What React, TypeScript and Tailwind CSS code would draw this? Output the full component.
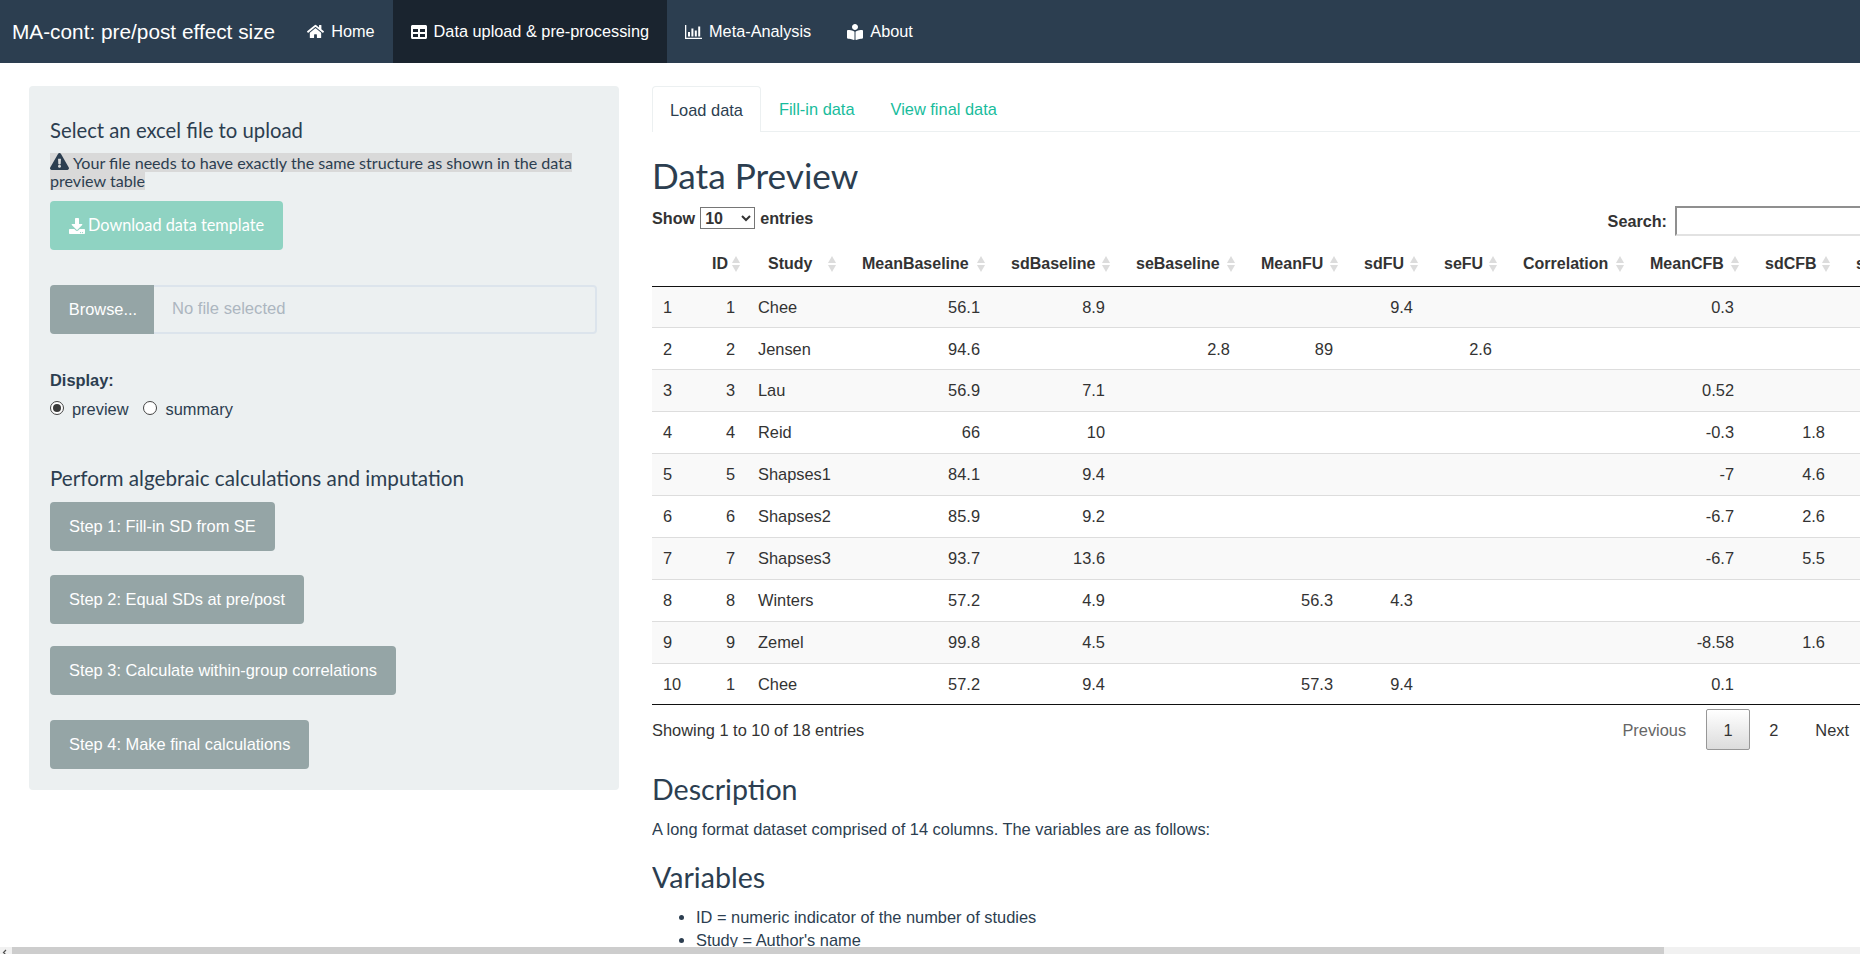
import { FaHome, FaTable, FaBookReader, FaExclamationTriangle, FaDownload } from 'react-icons/fa';

const sans = "font-['Liberation_Sans',Arial,sans-serif]";

const columns = [
  { name: '', width: 41, pl: 'pl-[19px]' },
  { name: 'ID', width: 54, pl: 'pl-[19px]' },
  { name: 'Study', width: 96, pl: 'pl-[21px]' },
  { name: 'MeanBaseline', width: 149, pl: 'pl-[19px]' },
  { name: 'sdBaseline', width: 125, pl: 'pl-[19px]' },
  { name: 'seBaseline', width: 125, pl: 'pl-[19px]' },
  { name: 'MeanFU', width: 103, pl: 'pl-[19px]' },
  { name: 'sdFU', width: 80, pl: 'pl-[19px]' },
  { name: 'seFU', width: 79, pl: 'pl-[19px]' },
  { name: 'Correlation', width: 127, pl: 'pl-[19px]' },
  { name: 'MeanCFB', width: 115, pl: 'pl-[19px]' },
  { name: 'sdCFB', width: 91, pl: 'pl-[19px]' },
  { name: 'seCFB', width: 80, pl: 'pl-[19px]' },
];

const rows = [
  ['1', '1', 'Chee', '56.1', '8.9', '', '', '9.4', '', '', '0.3', '', ''],
  ['2', '2', 'Jensen', '94.6', '', '2.8', '89', '', '2.6', '', '', '', ''],
  ['3', '3', 'Lau', '56.9', '7.1', '', '', '', '', '', '0.52', '', ''],
  ['4', '4', 'Reid', '66', '10', '', '', '', '', '', '-0.3', '1.8', ''],
  ['5', '5', 'Shapses1', '84.1', '9.4', '', '', '', '', '', '-7', '4.6', ''],
  ['6', '6', 'Shapses2', '85.9', '9.2', '', '', '', '', '', '-6.7', '2.6', ''],
  ['7', '7', 'Shapses3', '93.7', '13.6', '', '', '', '', '', '-6.7', '5.5', ''],
  ['8', '8', 'Winters', '57.2', '4.9', '', '56.3', '4.3', '', '', '', '', ''],
  ['9', '9', 'Zemel', '99.8', '4.5', '', '', '', '', '', '-8.58', '1.6', ''],
  ['10', '1', 'Chee', '57.2', '9.4', '', '57.3', '9.4', '', '', '0.1', '', ''],
];

const steps = [
  { label: 'Step 1: Fill-in SD from SE', mt: 'mt-0' },
  { label: 'Step 2: Equal SDs at pre/post', mt: 'mt-[24px]' },
  { label: 'Step 3: Calculate within-group correlations', mt: 'mt-[22px]' },
  { label: 'Step 4: Make final calculations', mt: 'mt-[25px]' },
];

function SortArrows() {
  return (
    <svg width="8" height="18" viewBox="0 0 8 18" className="shrink-0" fill="#dcdcdc">
      <path d="M4 1 8 8H0z" />
      <path d="M4 17 0 10h8z" />
    </svg>
  );
}

function BarChartIcon() {
  return (
    <svg width="17" height="14" viewBox="0 0 17 14" fill="white">
      <path d="M0 0h1.3v12.7H17V14H0z" />
      <rect x="3" y="7" width="2" height="4.5" />
      <rect x="6.4" y="3.5" width="2" height="8" />
      <rect x="9.8" y="5.5" width="2" height="6" />
      <rect x="13.2" y="1.5" width="2" height="10" />
    </svg>
  );
}

function Radio({ checked }: { checked?: boolean }) {
  return (
    <span className="flex items-center justify-center w-[14px] h-[14px] mb-[3px] rounded-full border border-[#444] bg-white">
      {checked && <span className="w-[8px] h-[8px] rounded-full bg-[#3a3a3a]" />}
    </span>
  );
}

function NavItem({ icon, label, active }: { icon: React.ReactNode; label: string; active?: boolean }) {
  return (
    <a className={`flex items-center gap-[7px] h-full px-[18px] text-white text-[16.3px] ${active ? 'bg-[#1a242f]' : ''}`}>
      {icon}
      {label}
    </a>
  );
}

export default function App() {
  return (
    <div className={`relative h-[954px] w-[1860px] overflow-hidden bg-white text-[#2c3e50] ${sans}`}>
      <nav className="flex items-center h-[63px] bg-[#2c3e50]">
        <span className="pl-[12px] pr-[14px] text-white text-[20.8px]">MA-cont: pre/post effect size</span>
        <NavItem icon={<FaHome size={17} />} label="Home" />
        <NavItem icon={<FaTable size={16} />} label="Data upload & pre-processing" active />
        <NavItem icon={<BarChartIcon />} label="Meta-Analysis" />
        <NavItem icon={<FaBookReader size={16} />} label="About" />
      </nav>

      <div className="flex items-start pl-[29px] pt-[23px] gap-[33px]">
        <aside className="w-[590px] h-[704px] shrink-0 bg-[#ecf0f1] rounded-[4px] px-[21px] pt-[31px]">
          <h4 className="font-['Lato',sans-serif] text-[20.3px] leading-[26px]">Select an excel file to upload</h4>
          <p className="mt-[9px] font-['Lato',sans-serif] text-[16.1px] leading-[17.5px]">
            <span className="bg-[#d9d9d9]">
              <FaExclamationTriangle className="inline align-[-2px] mr-[4px]" size={19} />
              Your file needs to have exactly the same structure as shown in the data preview table
            </span>
          </p>
          <button className="flex items-center gap-[3px] mt-[12px] h-[49px] w-[233px] pl-[19px] rounded-[4px] bg-[#8fd3c2] text-white font-['Lato',sans-serif] text-[16.3px] whitespace-nowrap">
            <FaDownload className="shrink-0" size={16} />
            Download data template
          </button>
          <div className="flex mt-[35px] h-[49px] w-[547px]">
            <button className="w-[104px] pl-[2px] rounded-l-[4px] bg-[#95a5a6] text-white text-[16.4px]">Browse...</button>
            <div className="flex-1 flex items-center px-[18px] border-2 border-l-0 border-[#dce4ec] rounded-r-[4px] text-[#acb6c0] text-[16.6px]">
              No file selected
            </div>
          </div>
          <div className="mt-[35px] font-bold text-[16.4px] leading-[22px]">Display:</div>
          <div className="flex items-center mt-[7px] text-[16.4px] leading-[22px]">
            <Radio checked />
            <span className="ml-[8px]">preview</span>
            <span className="w-[15px]" />
            <Radio />
            <span className="ml-[8px]">summary</span>
          </div>
          <h4 className="mt-[45px] font-['Lato',sans-serif] text-[20.7px] leading-[26px]">Perform algebraic calculations and imputation</h4>
          <div className="flex flex-col items-start mt-[11px]">
            {steps.map((s) => (
              <button key={s.label} className={`${s.mt} h-[49px] px-[19px] rounded-[4px] bg-[#95a5a6] text-white text-[16.4px]`}>
                {s.label}
              </button>
            ))}
          </div>
        </aside>

        <main className="w-[1208px] shrink-0 overflow-hidden">
          <div className="flex h-[46px] border-b border-[#ecf0f1] text-[16.4px]">
            <a className="flex items-center pt-[2px] px-[17px] h-[46px] border border-b-0 border-[#ecf0f1] rounded-t-[4px] bg-white text-[#2c3e50]">Load data</a>
            <a className="flex items-center pt-[2px] px-[18px] text-[#18bc9c]">Fill-in data</a>
            <a className="flex items-center pt-[2px] px-[18px] text-[#18bc9c]">View final data</a>
          </div>

          <h1 className="mt-[20px] font-['Lato',sans-serif] text-[35.2px] leading-[47px]">Data Preview</h1>

          <div className="flex justify-between items-start mt-[7px] w-[1273px] h-[41px] text-[#333] font-bold text-[16.2px]">
            <div className="flex items-center gap-[5px] h-[24px]">
              Show
              <select className="w-[55px] h-[22px] border border-[#767676] bg-white text-[16px] font-bold">
                <option>10</option>
              </select>
              entries
            </div>
            <div className="flex items-center gap-[8px] h-[30px]">
              Search:
              <input className="w-[250px] h-[30px] border-2 border-t-[#8f8f8f] border-l-[#8f8f8f] border-b-[#e2e2e2] border-r-[#e2e2e2]" />
            </div>
          </div>

          <table className="table-fixed w-[1265px] border-collapse text-[#333] text-[16.4px]">
            <colgroup>
              {columns.map((c, i) => (
                <col key={i} className="" style={{ width: c.width }} />
              ))}
            </colgroup>
            <thead>
              <tr className="h-[39px] border-b-[1.5px] border-[#111]">
                {columns.map((c, i) => (
                  <th key={i} className={`${c.pl} pr-[7px] pb-[4px] text-[16px] font-bold whitespace-nowrap overflow-hidden`}>
                    {c.name && (
                      <div className="flex items-center justify-between">
                        <span>{c.name}</span>
                        <SortArrows />
                      </div>
                    )}
                  </th>
                ))}
              </tr>
            </thead>
            <tbody>
              {rows.map((row, r) => (
                <tr key={r} className={`h-[41.9px] border-b border-[#ddd] last:border-[#111] ${r % 2 === 0 ? 'bg-[#f9f9f9]' : 'bg-white'}`}>
                  {row.map((cell, i) => (
                    <td key={i} className={`${i === 2 ? 'pl-[11px]' : i === 0 ? 'pl-[11px]' : 'pl-[12px]'} pr-[12px] ${i === 0 || i === 2 ? 'text-left' : 'text-right'}`}>
                      {cell}
                    </td>
                  ))}
                </tr>
              ))}
            </tbody>
          </table>

          <div className="flex justify-between items-center mt-[4px] h-[41px] text-[16.4px] text-[#333]">
            <span>Showing 1 to 10 of 18 entries</span>
            <div className="flex items-center pr-[11px]">
              <span className="text-[#666] mr-[20px]">Previous</span>
              <span className="flex items-center justify-center w-[44px] h-[41px] border border-[#979797] rounded-[2px] bg-linear-to-b from-white to-[#dcdcdc]">1</span>
              <span className="ml-[19px]">2</span>
              <span className="ml-[37px]">Next</span>
            </div>
          </div>

          <h3 className="mt-[23px] font-['Lato',sans-serif] text-[28.6px] leading-[32px]">Description</h3>
          <p className="mt-[13px] text-[16.4px] leading-[22px]">A long format dataset comprised of 14 columns. The variables are as follows:</p>
          <h3 className="mt-[21px] font-['Lato',sans-serif] text-[28.6px] leading-[32px]">Variables</h3>
          <ul className="mt-[13px] pl-[44px] list-disc text-[16.4px] leading-[22.5px]">
            <li>ID = numeric indicator of the number of studies</li>
            <li>Study = Author's name</li>
          </ul>
        </main>
      </div>

      <div className="absolute bottom-0 left-0 right-0 flex h-[7px] bg-[#f1f1f1]">
        <svg width="12" height="7" viewBox="0 0 12 7" fill="none" stroke="#505050" strokeWidth="1.2">
          <path d="M6 3 3.5 5.5 6 8" />
        </svg>
        <div className="w-[1652px] bg-[#cdcdcd]" />
      </div>
    </div>
  );
}
